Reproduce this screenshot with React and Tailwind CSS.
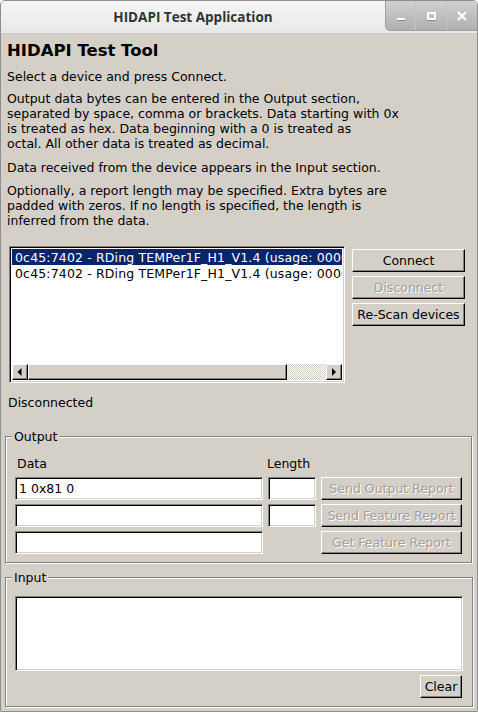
import React from 'react';

// FOX-style bevels
const raised = 'border border-t-white border-l-white border-b-black border-r-black shadow-[inset_-1px_-1px_0_#808080]';
const sunken = 'border border-t-[#808080] border-l-[#808080] border-b-white border-r-white shadow-[inset_1px_1px_0_#000,inset_-1px_-1px_0_#d4d0c8]';
const groove = 'border border-[#808080] shadow-[inset_1px_1px_0_#fff,1px_1px_0_#fff]';

const Button = ({ children, disabled, className = '' }) => (
  <div
    className={`${raised} bg-[#d4d0c8] flex items-center justify-center h-[23px] whitespace-nowrap ${
      disabled ? 'text-[#a3a09a] [text-shadow:1px_1px_0_#fff]' : 'text-black'
    } ${className}`}
  >
    {children}
  </div>
);

const Field = ({ value, className = '' }) => (
  <div className={`${sunken} bg-white h-[23px] flex items-center px-[3px] ${className}`}>{value}</div>
);

const Arrow = ({ dir }) => (
  <div className={`${raised} bg-[#d4d0c8] w-[16px] h-[16px] flex items-center justify-center`}>
    <svg width="6" height="8" viewBox="0 0 6 8">
      {dir === 'left' ? <path d="M4.5 0 L0.5 4 L4.5 8 Z" fill="#000" /> : <path d="M1 0 L5 4 L1 8 Z" fill="#000" />}
    </svg>
  </div>
);

const GroupBox = ({ label, className = '', children }) => (
  <div className={`relative ${groove} ${className}`}>
    <span className="absolute -top-[8px] left-[6px] bg-[#d4d0c8] px-[2px] leading-[15px]">{label}</span>
    {children}
  </div>
);

const devices = [
  '0c45:7402 - RDing TEMPer1F_H1_V1.4 (usage: 0000',
  '0c45:7402 - RDing TEMPer1F_H1_V1.4 (usage: 0000',
];

export default function App() {
  return (
    <div
      className="w-[478px] h-[714px] bg-white text-[12.5px] leading-[15px] text-black"
      style={{ fontFamily: '"DejaVu Sans", sans-serif' }}
    >
      <div className="h-[712px] flex flex-col border border-[#8e8e8e] rounded-t-[5px] overflow-hidden bg-[#d4d0c8]">
        {/* title bar */}
        <div className="h-[33px] flex bg-gradient-to-b from-[#f6f6f6] to-[#e8e8e8] border-b border-[#c8c8c8]">
          <div
            className="flex-1 flex items-center justify-center font-bold text-[13.5px] text-[#2e3436]"
            style={{ fontFamily: '"Open Sans", sans-serif' }}
          >
            HIDAPI Test Application
          </div>
          <div className="flex h-[30px] rounded-bl-[5px] overflow-hidden bg-gradient-to-b from-[#d0d0d0] to-[#b0b0b0] border-l border-b border-[#a0a0a0]">
            <div className="w-[30px] flex items-end justify-center pb-[10px] border-r border-[#c4c4c4]">
              <div className="w-[8px] h-[2px] bg-white shadow-[0_1px_0_#888]" />
            </div>
            <div className="w-[31px] flex items-center justify-center border-r border-[#c4c4c4]">
              <div className="w-[9px] h-[8px] border-2 border-white shadow-[0_1px_0_#888]" />
            </div>
            <div className="w-[30px] flex items-center justify-center">
              <svg width="10" height="10" viewBox="0 0 10 10">
                <path d="M1 1 L9 9 M9 1 L1 9" stroke="#fff" strokeWidth="2.2" />
              </svg>
            </div>
          </div>
        </div>

        {/* content */}
        <div className="flex flex-col pl-[6px] pr-[5px]">
          <h1 className="font-bold text-[16.5px] leading-[22px] mt-[6px]">HIDAPI Test Tool</h1>
          <p className="mt-[7px]">Select a device and press Connect.</p>
          <p className="mt-[7px]">
            Output data bytes can be entered in the Output section,
            <br />
            separated by space, comma or brackets. Data starting with 0x
            <br />
            is treated as hex. Data beginning with a 0 is treated as
            <br />
            octal. All other data is treated as decimal.
          </p>
          <p className="mt-[9px]">Data received from the device appears in the Input section.</p>
          <p className="mt-[8px]">
            Optionally, a report length may be specified. Extra bytes are
            <br />
            padded with zeros. If no length is specified, the length is
            <br />
            inferred from the data.
          </p>

          {/* device list + buttons */}
          <div className="flex mt-[18px] pl-[2px]">
            <div className={`${sunken} w-[336px] h-[137px] bg-white flex flex-col p-[2px]`}>
              <div className="flex-1 overflow-hidden">
                {devices.map((d, i) => (
                  <div
                    key={i}
                    className={`h-[16px] pl-[3px] whitespace-nowrap flex items-center tracking-[0.15px] ${
                      i === 0 ? 'bg-[#0a246a] text-white' : ''
                    }`}
                  >
                    {d}
                  </div>
                ))}
              </div>
              <div className="flex h-[16px]">
                <Arrow dir="left" />
                <div className={`${raised} bg-[#d4d0c8] w-[259px] h-[16px]`} />
                <div className="flex-1 bg-[repeating-conic-gradient(#d4d0c8_0_25%,#fff_0_50%)] bg-[length:2px_2px]" />
                <Arrow dir="right" />
              </div>
            </div>
            <div className="flex flex-col gap-[4px] ml-[7px] mt-[3px] w-[113px]">
              <Button>Connect</Button>
              <Button disabled>Disconnect</Button>
              <Button>Re-Scan devices</Button>
            </div>
          </div>

          <p className="mt-[12px] pl-[1px]">Disconnected</p>
        </div>

        {/* output */}
        <GroupBox label="Output" className="ml-[4px] mr-[5px] mt-[26px] h-[127px] pt-[19px] pl-[9px]">
          <div className="flex">
            <span className="pl-[2px] w-[252px]">Data</span>
            <span>Length</span>
          </div>
          <div className="flex flex-col gap-[4px] mt-[6px]">
            <div className="flex gap-[5px]">
              <Field value="1 0x81 0" className="w-[248px]" />
              <Field className="w-[48px]" />
              <Button disabled className="w-[141px]">Send Output Report</Button>
            </div>
            <div className="flex gap-[5px]">
              <Field className="w-[248px]" />
              <Field className="w-[48px]" />
              <Button disabled className="w-[141px]">Send Feature Report</Button>
            </div>
            <div className="flex gap-[5px]">
              <Field className="w-[248px]" />
              <div className="w-[48px]" />
              <Button disabled className="w-[141px]">Get Feature Report</Button>
            </div>
          </div>
        </GroupBox>

        {/* input */}
        <GroupBox label="Input" className="ml-[4px] mr-[4px] mt-[14px] h-[130px] pt-[18px] px-[9px]">
          <div className={`${sunken} bg-white h-[75px] w-[448px]`} />
          <div className="flex justify-end mt-[4px] pr-[1px]">
            <Button className="w-[42px]">Clear</Button>
          </div>
        </GroupBox>
      </div>
    </div>
  );
}
